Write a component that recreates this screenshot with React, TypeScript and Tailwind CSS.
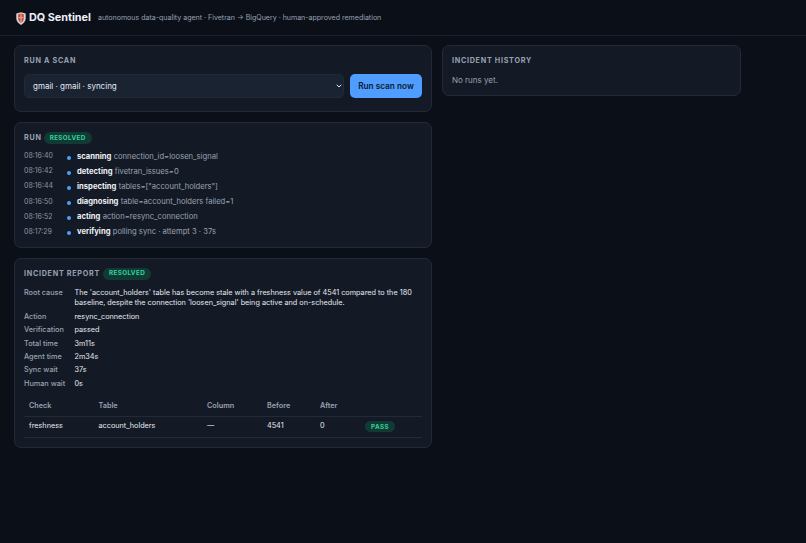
import React from "react";
import { ChevronDown } from "lucide-react";

const steps = [
  { time: "08:16:40", name: "scanning", detail: "connection_id=loosen_signal" },
  { time: "08:16:42", name: "detecting", detail: "fivetran_issues=0" },
  { time: "08:16:44", name: "inspecting", detail: 'tables=["account_holders"]' },
  { time: "08:16:50", name: "diagnosing", detail: "table=account_holders failed=1" },
  { time: "08:16:52", name: "acting", detail: "action=resync_connection" },
  { time: "08:17:29", name: "verifying", detail: "polling sync · attempt 3 · 37s" },
];

const facts = [
  { label: "Action", value: "resync_connection" },
  { label: "Verification", value: "passed" },
  { label: "Total time", value: "3m11s" },
  { label: "Agent time", value: "2m34s" },
  { label: "Sync wait", value: "37s" },
  { label: "Human wait", value: "0s" },
];

function Pill({ children }: { children: React.ReactNode }) {
  return (
    <span className="rounded-full bg-[#123a35] px-[6px] py-[1.5px] text-[6.3px] leading-[9px] font-bold tracking-[0.06em] text-[#34d399]">
      {children}
    </span>
  );
}

function CardTitle({ children }: { children: React.ReactNode }) {
  return <h2 className="text-[7.2px] leading-[12px] font-bold tracking-[0.1em] text-[#98a2b3] uppercase">{children}</h2>;
}

function Shield() {
  return (
    <svg width="10" height="13" viewBox="0 0 10 13" className="shrink-0">
      <path d="M0.3 1.4 L5 0.2 L9.7 1.4 V6.6 C9.7 9.6 7.4 11.6 5 12.9 C2.6 11.6 0.3 9.6 0.3 6.6 Z" fill="#d8d4d0" />
      <path d="M2.2 2.3 L5 1.6 L7.8 2.3 V6.6 C7.8 8.6 6.4 10.2 5 11.2 C3.6 10.2 2.2 8.6 2.2 6.6 Z" fill="#c4493f" />
      <path d="M4.5 1.7 H5.5 V11 H4.5 Z M2.4 5 H7.6 V5.8 H2.4 Z" fill="#e6b3a6" />
    </svg>
  );
}

export default function App() {
  return (
    <div className="min-h-[543px] bg-[#0b0f17] font-['Inter',sans-serif] text-[#e5e9f0]">
      <header className="flex h-[36px] items-center gap-[7px] border-b border-[#1c222d] px-[16px] pt-[1px]">
        <div className="flex items-center gap-[3px]">
          <Shield />
          <span className="text-[10.8px] font-bold text-[#eef1f6]">DQ Sentinel</span>
        </div>
        <span className="text-[7.05px] text-[#98a2b3]">autonomous data-quality agent · Fivetran → BigQuery · human-approved remediation</span>
      </header>

      <main className="grid w-[755px] grid-cols-[418px_299px] items-start gap-[10px] px-[14px] py-[9px]">
        <div className="flex flex-col gap-[10px]">
          <section className="rounded-[7px] border border-[#232a37] bg-[#141a25] px-[9px] pt-[9px] pb-[13px]">
            <CardTitle>Run a scan</CardTitle>
            <div className="mt-[7px] flex items-center gap-[6px]">
              <div className="relative min-w-0 flex-1">
                <select className="block h-[24px] w-full appearance-none rounded-[5px] border border-[#232a37] bg-[#1a2332] px-[8px] text-[8px] text-[#e5e9f0]">
                  <option>gmail · gmail · syncing</option>
                </select>
                <ChevronDown size={8} strokeWidth={3} className="absolute top-[8px] right-[1px] text-[#e5e9f0]" />
              </div>
              <button className="h-[24px] w-[72px] rounded-[5px] bg-[#4f9dff] text-[8.25px] font-semibold text-[#0b1a30]">Run scan now</button>
            </div>
          </section>

          <section className="rounded-[7px] border border-[#232a37] bg-[#141a25] px-[9px] pt-[9px] pb-[7px]">
            <div className="flex items-center gap-[2px]">
              <CardTitle>Run</CardTitle>
              <Pill>RESOLVED</Pill>
            </div>
            <ul className="mt-[5px] flex flex-col">
              {steps.map((s) => (
                <li key={s.time} className="flex h-[15.1px] items-center text-[7.63px]">
                  <span className="w-[43px] text-[7px] text-[#8b95a7]">{s.time}</span>
                  <span className="mt-[2px] mr-[6px] h-[4px] w-[4px] shrink-0 rounded-full bg-[#4f9dff]" />
                  <span className="font-bold text-[#eef1f6]">{s.name}</span>
                  <span className="ml-[2.3px] text-[#98a2b3]">{s.detail}</span>
                </li>
              ))}
            </ul>
          </section>

          <section className="rounded-[7px] border border-[#232a37] bg-[#141a25] px-[9px] pt-[9px] pb-[9px]">
            <div className="flex items-center gap-[3px]">
              <CardTitle>Incident report</CardTitle>
              <Pill>RESOLVED</Pill>
            </div>
            <div className="mt-[8px] grid grid-cols-[50.5px_1fr] gap-y-[2.6px] text-[7.28px] leading-[10.8px]">
              <span className="font-medium text-[#98a2b3]">Root cause</span>
              <span className="text-[#e5e9f0]">
                The 'account_holders' table has become stale with a freshness value of 4541 compared to the 180 baseline, despite the connection 'loosen_signal' being active and on-schedule.
              </span>
              {facts.map((f) => (
                <React.Fragment key={f.label}>
                  <span className="font-medium text-[#98a2b3]">{f.label}</span>
                  <span className="text-[#e5e9f0]">{f.value}</span>
                </React.Fragment>
              ))}
            </div>
            <table className="mt-[7.5px] w-full table-fixed border-collapse text-[7.28px]">
              <colgroup>
                <col className="w-[69.5px]" />
                <col className="w-[108.5px]" />
                <col className="w-[60px]" />
                <col className="w-[53px]" />
                <col className="w-[45px]" />
                <col />
              </colgroup>
              <thead>
                <tr className="border-b border-[#232a37] text-left text-[#98a2b3]">
                  <th className="h-[19px] px-[5px] font-semibold">Check</th>
                  <th className="px-[5px] font-semibold">Table</th>
                  <th className="px-[5px] font-semibold">Column</th>
                  <th className="px-[5px] font-semibold">Before</th>
                  <th className="px-[5px] font-semibold">After</th>
                  <th />
                </tr>
              </thead>
              <tbody>
                <tr className="border-b border-[#232a37] text-[#e5e9f0]">
                  <td className="h-[21px] px-[5px]">freshness</td>
                  <td className="px-[5px]">account_holders</td>
                  <td className="px-[5px]">—</td>
                  <td className="px-[5px]">4541</td>
                  <td className="px-[5px]">0</td>
                  <td className="px-[5px]">
                    <Pill>PASS</Pill>
                  </td>
                </tr>
              </tbody>
            </table>
          </section>
        </div>

        <section className="rounded-[7px] border border-[#232a37] bg-[#141a25] px-[9px] pt-[9px] pb-[9px]">
          <CardTitle>Incident history</CardTitle>
          <p className="mt-[7px] text-[8px] leading-[12px] text-[#98a2b3]">No runs yet.</p>
        </section>
      </main>
    </div>
  );
}
